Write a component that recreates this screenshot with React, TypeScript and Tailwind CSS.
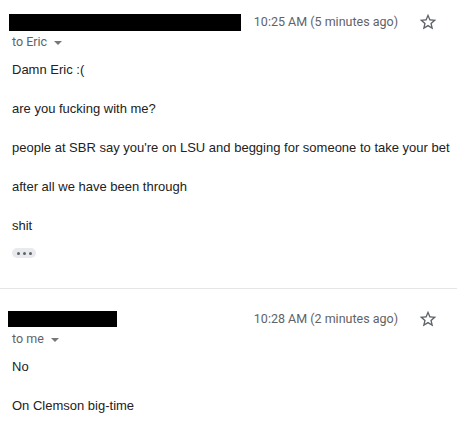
import type { ReactNode } from 'react';

interface Message {
  redactWidth: string;
  redactHeight: string;
  redactOffset: string;
  time: string;
  recipient: string;
  lines: string[];
  trimmed?: boolean;
}

const messages: Message[] = [
  {
    redactWidth: 'w-[232px]',
    redactHeight: 'h-[17px]',
    redactOffset: 'ml-[9px]',
    time: '10:25 AM (5 minutes ago)',
    recipient: 'to Eric',
    lines: [
      'Damn Eric :(',
      'are you fucking with me?',
      "people at SBR say you're on LSU and begging for someone to take your bet",
      'after all we have been through',
      'shit',
    ],
    trimmed: true,
  },
  {
    redactWidth: 'w-[109px]',
    redactHeight: 'h-[16px]',
    redactOffset: 'ml-[8px]',
    time: '10:28 AM (2 minutes ago)',
    recipient: 'to me',
    lines: ['No', 'On Clemson big-time'],
  },
];

function StarIcon() {
  return (
    <svg viewBox="0 0 24 24" className="w-[20px] h-[20px] fill-[#5f6368]">
      <path d="M22 9.24l-7.19-.62L12 2 9.19 8.63 2 9.24l5.46 4.73L5.82 21 12 17.27 18.18 21l-1.63-7.03L22 9.24zM12 15.4l-3.76 2.27 1-4.28-3.32-2.88 4.38-.38L12 6.1l1.71 4.04 4.38.38-3.32 2.88 1 4.28L12 15.4z" />
    </svg>
  );
}

function Body({ children }: { children: ReactNode }) {
  return (
    <div className="mt-[8px] pl-[12px] font-['Liberation_Sans',Arial,sans-serif] text-[13px] leading-[19px] text-[#222222] whitespace-nowrap">
      {children}
    </div>
  );
}

function MessageView({ message }: { message: Message }) {
  return (
    <div>
      {/* Header */}
      <div className="flex items-center h-[20px] pr-[19px] font-['Roboto',sans-serif]">
        <div className={`${message.redactOffset} ${message.redactWidth} ${message.redactHeight} bg-black`} />
        <div className="ml-auto text-[12.5px] leading-[20px] text-[#5f6368]">{message.time}</div>
        <div className="ml-[20px] flex items-center">
          <StarIcon />
        </div>
      </div>
      <div className="flex items-center pl-[12px] h-[20px] font-['Roboto',sans-serif] text-[12.5px] text-[#5f6368]">
        <span>{message.recipient}</span>
        <span className="ml-[7px] mt-[1px] w-0 h-0 border-l-[4px] border-r-[4px] border-t-[4px] border-l-transparent border-r-transparent border-t-[#777777]" />
      </div>

      <Body>
        {message.lines.map((line, i) => (
          <p key={i} className={i < message.lines.length - 1 ? 'mb-[20px]' : ''}>
            {line}
          </p>
        ))}
      </Body>

      {message.trimmed && (
        <div className="mt-[13px] ml-[12px] w-[24px] h-[10px] rounded-full bg-[#e8eaed] flex items-center justify-center gap-[3px]">
          <span className="w-[3px] h-[3px] rounded-full bg-[#5f6368]" />
          <span className="w-[3px] h-[3px] rounded-full bg-[#5f6368]" />
          <span className="w-[3px] h-[3px] rounded-full bg-[#5f6368]" />
        </div>
      )}
    </div>
  );
}

export default function App() {
  return (
    <div className="w-[457px] h-[427px] bg-white overflow-hidden pt-[12px]">
      <MessageView message={messages[0]} />
      <div className="mt-[30px] border-t border-[#e5e5e5]" />
      <div className="pt-[20px]">
        <MessageView message={messages[1]} />
      </div>
    </div>
  );
}
